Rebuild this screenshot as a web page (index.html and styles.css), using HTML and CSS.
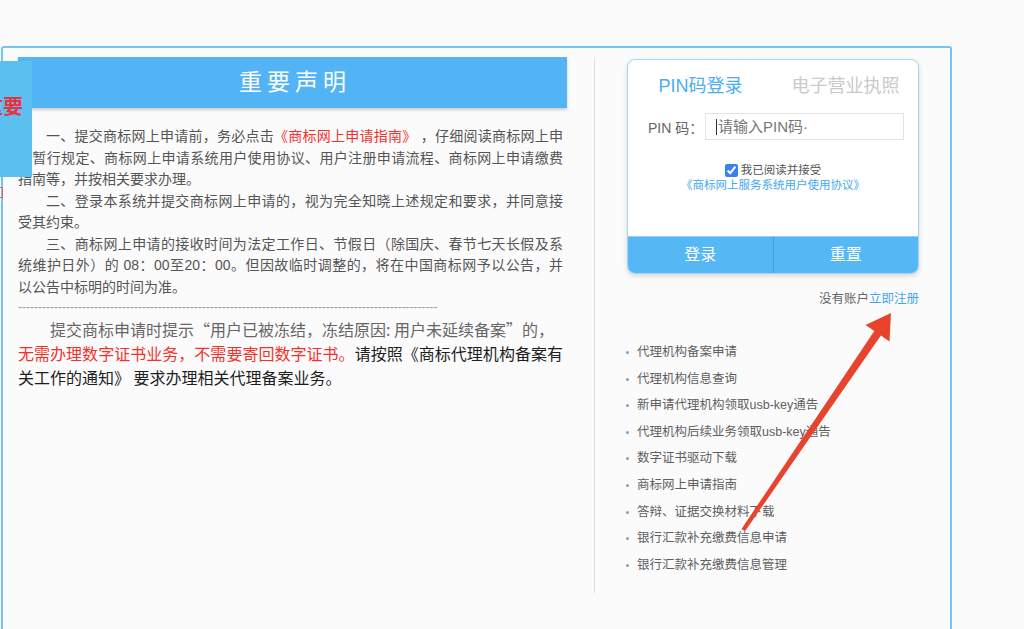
FILE: index.html
```html
<!DOCTYPE html>
<html lang="zh-CN">
<head>
    <meta charset="UTF-8">
    <title>商标网上服务系统</title>
    <link rel="stylesheet" href="styles.css">
</head>
<body>
    <div class="frame">
        <div class="notice">
            <div class="notice-title">重要声明</div>
            <div class="notice-body">
                <p class="clause">一、提交商标网上申请前，务必点击<a class="guide-link" href="#">《商标网上申请指南》</a> ，仔细阅读商标网上申请暂行规定、商标网上申请系统用户使用协议、用户注册申请流程、商标网上申请缴费<span class="keep">指南等，</span>并按相关要求办理。</p>
                <p class="clause">二、登录本系统并提交商标网上申请的，视为完全知晓上述规定和要求，并同意接<span class="keep">受其约束。</span></p>
                <p class="clause">三、商标网上申请的接收时间为法定工作日、节假日（除国庆、春节七天长假及系<span class="keep">统维护日外）的</span> 08：00至20：00。但因故临时调整的，将在中国商标网予以公告，并<span class="keep">以公告中标明的时间为准。</span></p>
                <div class="rule">---------------------------------------------------------------------------------------------------------</div>
                <p class="tip">提交商标申请时提示“用户已被冻结，冻结原因: 用户未延续备案”的，<br><span class="tip-red">无需办理数字证书业务，不需要寄回数字证书。</span><span class="tip-dark">请按照《商标代理机构备案有关工作的通知》 要求办理相关代理备案业务。</span></p>
            </div>
        </div>

        <div class="side">
            <div class="login">
                <div class="tabs">
                    <span class="tab tab-active">PIN码登录</span>
                    <span class="tab">电子营业执照</span>
                </div>
                <div class="pin-row">
                    <label class="pin-label" for="pin">PIN 码：</label>
                    <span class="pin-field"><input id="pin" class="pin-input" type="password" placeholder="请输入PIN码·"></span>
                </div>
                <div class="agree">
                    <input class="agree-check" type="checkbox" checked>
                    <span>我已阅读并接受</span>
                </div>
                <a class="agree-link" href="#">《商标网上服务系统用户使用协议》</a>
                <div class="actions">
                    <span class="action">登录</span>
                    <span class="action">重置</span>
                </div>
            </div>

            <div class="register">没有账户<a href="#">立即注册</a></div>

            <ul class="links">
                <li>代理机构备案申请</li>
                <li>代理机构信息查询</li>
                <li>新申请代理机构领取usb-key通告</li>
                <li>代理机构后续业务领取usb-key通告</li>
                <li>数字证书驱动下载</li>
                <li>商标网上申请指南</li>
                <li>答辩、证据交换材料下载</li>
                <li>银行汇款补充缴费信息申请</li>
                <li>银行汇款补充缴费信息管理</li>
            </ul>
        </div>
    </div>

    <div class="side-tab"><span class="side-tab-text">重要</span></div>
    <span class="side-mark"></span>

    <svg class="arrow" width="1024" height="629" viewBox="0 0 1024 629">
        <polygon points="741.5,529 874.3,330.9 865.5,325 891,313 889.5,341.5 880.9,335.5 745,531.2" fill="#e8432d"/>
    </svg>
</body>
</html>
```

FILE: styles.css
```css
body {
    margin: 0;
    background: #fbfbfc;
    font-family: "Liberation Sans", "Noto Sans CJK SC", sans-serif;
    color: #555;
    overflow: hidden;
}

a {
    text-decoration: none;
}

.frame {
    display: flex;
    width: 947px;
    height: 581px;
    margin: 46px 0 0 1px;
    border: 2px solid #74c4f5;
    border-bottom: none;
    border-radius: 3px 3px 0 0;
}

/* left: notice */
.notice {
    width: 549px;
    height: 536px;
    margin: 9px 0 0 15px;
    padding-right: 27px;
    border-right: 1px solid #dedede;
}

.notice-title {
    height: 51px;
    line-height: 50px;
    background: #52b4f5;
    color: #fff;
    font-size: 23px;
    letter-spacing: 5px;
    text-indent: 5px;
    text-align: center;
    box-shadow: 0 2px 3px rgba(0, 0, 0, 0.18);
}

.notice-body {
    width: 545px;
    padding-top: 18px;
}

.clause {
    margin: 0;
    font-size: 14px;
    line-height: 21.5px;
    text-indent: 2em;
    text-align: justify;
    color: #555;
}

.guide-link {
    color: #f2302c;
}

.keep {
    white-space: nowrap;
}

.rule {
    white-space: nowrap;
    font-size: 12px;
    line-height: 18px;
    color: #999;
}

.tip {
    margin: 1px 0 0;
    font-family: "Noto Sans CJK SC", sans-serif;
    font-size: 16px;
    line-height: 24px;
    text-indent: 2em;
    text-align: justify;
    color: #666;
}

.tip-red {
    color: #f5302a;
}

.tip-dark {
    color: #1e1e1e;
}

/* right: login */
.side {
    width: 292px;
    margin-left: 32px;
}

.login {
    box-sizing: border-box;
    margin-top: 11px;
    border: 1px solid #a3d6f8;
    border-radius: 8px;
    background: #fff;
    box-shadow: 0 2px 5px rgba(0, 0, 0, 0.15);
    overflow: hidden;
}

.tabs {
    display: flex;
    padding-top: 14px;
}

.tab {
    flex: 1;
    text-align: center;
    font-size: 18px;
    line-height: 24px;
    color: #cacaca;
}

.tab-active {
    color: #4aaef0;
}

.pin-row {
    display: flex;
    align-items: center;
    margin-top: 15px;
    padding-left: 20px;
}

.pin-label {
    width: 57px;
    font-size: 14px;
    color: #666;
}

.pin-field {
    position: relative;
    display: block;
}

.pin-field::before {
    content: "";
    position: absolute;
    left: 11px;
    top: 6px;
    width: 1px;
    height: 16px;
    background: #333;
}

.pin-input {
    box-sizing: border-box;
    display: block;
    width: 199px;
    height: 27px;
    margin: 0;
    padding: 0 0 0 12px;
    border: 1px solid #e3e3e3;
    outline: none;
    font-family: inherit;
    font-size: 15px;
}

.pin-input::placeholder {
    color: #777;
}

.agree {
    display: flex;
    justify-content: center;
    align-items: center;
    gap: 3px;
    margin-top: 23px;
    font-size: 11.5px;
    line-height: 15px;
    color: #555;
}

.agree-check {
    width: 13px;
    height: 13px;
    margin: 0;
    accent-color: #3b7ff5;
}

.agree-link {
    display: block;
    text-align: center;
    font-size: 11.5px;
    line-height: 15px;
    color: #46a7ec;
}

.actions {
    display: flex;
    margin-top: 43px;
    background: #56b7f5;
    border-top: 1px solid #8fd1fa;
}

.action {
    flex: 1;
    height: 36px;
    line-height: 36px;
    text-align: center;
    color: #fff;
    font-size: 16px;
}

.action + .action {
    border-left: 1px solid #3f9fdc;
}

.register {
    margin-top: 15px;
    text-align: right;
    font-size: 12.5px;
    line-height: 20px;
    color: #666;
}

.register a {
    color: #46a7ec;
}

.links {
    margin: 30px 0 0;
    padding: 0;
    list-style: none;
}

.links li {
    position: relative;
    padding-left: 10px;
    font-size: 12.5px;
    line-height: 26.6px;
    color: #5f5f5f;
}

.links li::before {
    content: "";
    position: absolute;
    left: -1px;
    top: 12px;
    width: 3px;
    height: 3px;
    border-radius: 50%;
    background: #999;
}

/* floating pieces */
.side-tab {
    position: absolute;
    left: 0;
    top: 61px;
    width: 32px;
    height: 116px;
    background: #5bc0f0;
    overflow: hidden;
}

.side-tab-text {
    position: absolute;
    left: -17px;
    top: 34px;
    font-size: 20px;
    line-height: 24px;
    font-weight: bold;
    color: #e8313c;
    white-space: nowrap;
}

.side-mark {
    position: absolute;
    left: 0;
    top: 187px;
    width: 2px;
    height: 9px;
    border: 1px solid #f05a5a;
    border-left: none;
}

.arrow {
    position: absolute;
    left: 0;
    top: 0;
    pointer-events: none;
}
```
